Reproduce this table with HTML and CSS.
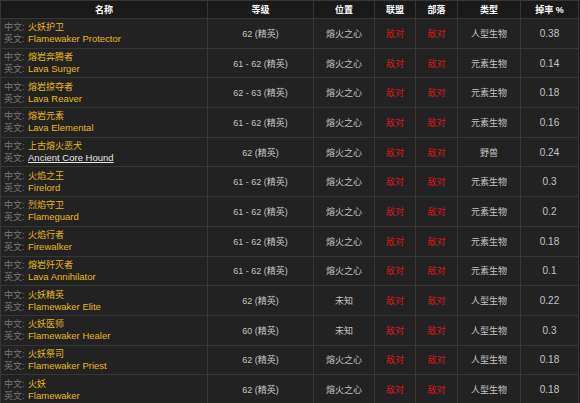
FILE: index.html
```html
<!DOCTYPE html>
<html lang="zh-CN">
<head>
  <meta charset="UTF-8">
  <title>熔火之心 怪物列表</title>
  <link rel="stylesheet" href="styles.css">
</head>
<body>
  <table class="mobs">
    <colgroup>
      <col class="c-name"><col class="c-level"><col class="c-zone"><col class="c-ally"><col class="c-horde"><col class="c-type"><col class="c-rate">
    </colgroup>
    <thead>
      <tr><th>名称</th><th>等级</th><th>位置</th><th>联盟</th><th>部落</th><th>类型</th><th>掉率 %</th></tr>
    </thead>
    <tbody>
      <tr>
        <td class="name"><div><span class="lbl">中文:</span> <span class="cn">火妖护卫</span></div><div><span class="lbl">英文:</span> <span class="en">Flamewaker Protector</span></div></td>
        <td>62 (精英)</td><td>熔火之心</td><td class="hostile">敌对</td><td class="hostile">敌对</td><td>人型生物</td><td class="num">0.38</td>
      </tr>
      <tr>
        <td class="name"><div><span class="lbl">中文:</span> <span class="cn">熔岩奔腾者</span></div><div><span class="lbl">英文:</span> <span class="en">Lava Surger</span></div></td>
        <td>61 - 62 (精英)</td><td>熔火之心</td><td class="hostile">敌对</td><td class="hostile">敌对</td><td>元素生物</td><td class="num">0.14</td>
      </tr>
      <tr>
        <td class="name"><div><span class="lbl">中文:</span> <span class="cn">熔岩掠夺者</span></div><div><span class="lbl">英文:</span> <span class="en">Lava Reaver</span></div></td>
        <td>62 - 63 (精英)</td><td>熔火之心</td><td class="hostile">敌对</td><td class="hostile">敌对</td><td>元素生物</td><td class="num">0.18</td>
      </tr>
      <tr>
        <td class="name"><div><span class="lbl">中文:</span> <span class="cn">熔岩元素</span></div><div><span class="lbl">英文:</span> <span class="en">Lava Elemental</span></div></td>
        <td>61 - 62 (精英)</td><td>熔火之心</td><td class="hostile">敌对</td><td class="hostile">敌对</td><td>元素生物</td><td class="num">0.16</td>
      </tr>
      <tr>
        <td class="name"><div><span class="lbl">中文:</span> <span class="cn">上古熔火恶犬</span></div><div><span class="lbl">英文:</span> <a class="en link" href="#">Ancient Core Hound</a></div></td>
        <td>62 (精英)</td><td>熔火之心</td><td class="hostile">敌对</td><td class="hostile">敌对</td><td>野兽</td><td class="num">0.24</td>
      </tr>
      <tr>
        <td class="name"><div><span class="lbl">中文:</span> <span class="cn">火焰之王</span></div><div><span class="lbl">英文:</span> <span class="en">Firelord</span></div></td>
        <td>61 - 62 (精英)</td><td>熔火之心</td><td class="hostile">敌对</td><td class="hostile">敌对</td><td>元素生物</td><td class="num">0.3</td>
      </tr>
      <tr>
        <td class="name"><div><span class="lbl">中文:</span> <span class="cn">烈焰守卫</span></div><div><span class="lbl">英文:</span> <span class="en">Flameguard</span></div></td>
        <td>61 - 62 (精英)</td><td>熔火之心</td><td class="hostile">敌对</td><td class="hostile">敌对</td><td>元素生物</td><td class="num">0.2</td>
      </tr>
      <tr>
        <td class="name"><div><span class="lbl">中文:</span> <span class="cn">火焰行者</span></div><div><span class="lbl">英文:</span> <span class="en">Firewalker</span></div></td>
        <td>61 - 62 (精英)</td><td>熔火之心</td><td class="hostile">敌对</td><td class="hostile">敌对</td><td>元素生物</td><td class="num">0.18</td>
      </tr>
      <tr>
        <td class="name"><div><span class="lbl">中文:</span> <span class="cn">熔岩歼灭者</span></div><div><span class="lbl">英文:</span> <span class="en">Lava Annihilator</span></div></td>
        <td>61 - 62 (精英)</td><td>熔火之心</td><td class="hostile">敌对</td><td class="hostile">敌对</td><td>元素生物</td><td class="num">0.1</td>
      </tr>
      <tr>
        <td class="name"><div><span class="lbl">中文:</span> <span class="cn">火妖精英</span></div><div><span class="lbl">英文:</span> <span class="en">Flamewaker Elite</span></div></td>
        <td>62 (精英)</td><td>未知</td><td class="hostile">敌对</td><td class="hostile">敌对</td><td>人型生物</td><td class="num">0.22</td>
      </tr>
      <tr>
        <td class="name"><div><span class="lbl">中文:</span> <span class="cn">火妖医师</span></div><div><span class="lbl">英文:</span> <span class="en">Flamewaker Healer</span></div></td>
        <td>60 (精英)</td><td>未知</td><td class="hostile">敌对</td><td class="hostile">敌对</td><td>人型生物</td><td class="num">0.3</td>
      </tr>
      <tr>
        <td class="name"><div><span class="lbl">中文:</span> <span class="cn">火妖祭司</span></div><div><span class="lbl">英文:</span> <span class="en">Flamewaker Priest</span></div></td>
        <td>62 (精英)</td><td>熔火之心</td><td class="hostile">敌对</td><td class="hostile">敌对</td><td>人型生物</td><td class="num">0.18</td>
      </tr>
      <tr>
        <td class="name"><div><span class="lbl">中文:</span> <span class="cn">火妖</span></div><div><span class="lbl">英文:</span> <span class="en">Flamewaker</span></div></td>
        <td>62 (精英)</td><td>熔火之心</td><td class="hostile">敌对</td><td class="hostile">敌对</td><td>人型生物</td><td class="num">0.18</td>
      </tr>
    </tbody>
  </table>
</body>
</html>
```

FILE: styles.css
```css
body { margin: 0; background: #1c1c1c; font-family: "Liberation Sans", "Noto Sans CJK SC", sans-serif; font-size: 9px; color: #c4c4c4; }
.mobs { border-collapse: collapse; table-layout: fixed; width: 578px; background: #222; }
.c-name { width: 207px; }
.c-level { width: 106px; }
.c-zone { width: 61px; }
.c-ally { width: 41px; }
.c-horde { width: 42px; }
.c-type { width: 63px; }
.c-rate { width: 58px; }
.mobs th, .mobs td { border: 1px solid #363636; text-align: center; vertical-align: middle; padding: 0; }
.mobs th { height: 17px; background: #1a1a1a; color: #fff; font-weight: bold; font-size: 9px; }
.mobs td { height: 28.7px; }
.mobs td.name { text-align: left; padding-left: 3px; line-height: 12px; }
.lbl { color: #777; }
.cn { color: #e9b81f; margin-left: 1px; }
.en { color: #e9b81f; font-size: 9.5px; margin-left: 1px; }
.link { color: #e6e6e6; text-decoration: underline; }
.hostile { color: #cf1a1c; }
.num { font-size: 10px; }
```
